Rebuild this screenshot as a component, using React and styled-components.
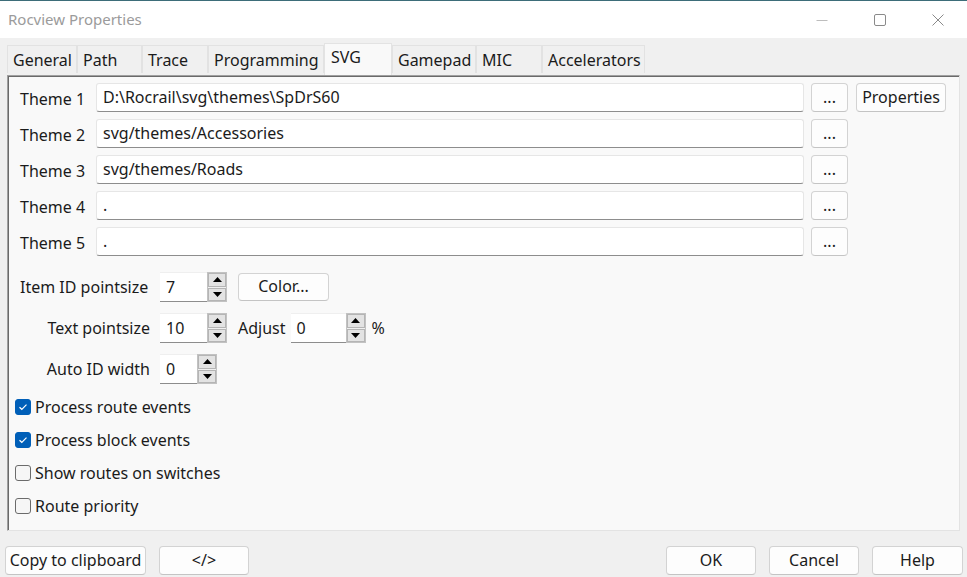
import React from 'react';
import styled, { createGlobalStyle } from 'styled-components';

const GlobalStyle = createGlobalStyle`
  html, body {
    margin: 0;
    padding: 0;
    background: #f0f0f0;
  }
  body {
    font-family: "Noto Sans", "Open Sans", sans-serif;
    font-size: 16px;
    color: #1b1b1b;
  }
  * { box-sizing: border-box; }
`

const Window = styled.div`
  width: 967px;
  height: 577px;
  background: #f0f0f0;
  display: flex;
  flex-direction: column;
  overflow: hidden;
`

const TitleBar = styled.div`
  height: 38px;
  flex: none;
  background: #ffffff;
  border-top: 1px solid #3d6d79;
  display: flex;
  align-items: center;
  padding-left: 8px;
`

const Title = styled.div`
  flex: 1;
  color: #9b9b9b;
  font-size: 15px;
  padding-bottom: 2px;
`

const WinButton = styled.div`
  width: 58px;
  height: 37px;
  display: flex;
  align-items: center;
  justify-content: center;
`

const TabBar = styled.div`
  height: 37px;
  flex: none;
  display: flex;
  align-items: flex-end;
  padding-left: 7px;
`

const Tab = styled.div`
  width: ${p => p.w}px;
  height: ${p => (p.active ? 32 : 28)}px;
  margin-bottom: ${p => (p.active ? 0 : 2)}px;
  padding: ${p => (p.active ? '2px 0 0 6px' : '3px 0 0 5px')};
  background: ${p => (p.active ? '#f9f9f9' : '#f0f0f0')};
  border: 1px solid ${p => (p.active ? '#e3e3e3' : '#e2e2e2')};
  border-bottom: none;
  white-space: nowrap;
  line-height: 22px;
`

const Panel = styled.div`
  margin: 0 7px;
  height: 456px;
  flex: none;
  background: #f9f9f9;
  border-top: 1px solid #a0a0a0;
  border-left: 1px solid #a0a0a0;
  border-right: 1px solid #e3e3e3;
  border-bottom: 1px solid #e3e3e3;
  box-shadow: inset 1px 1px 0 #6a6a6a;
  padding: 7px 13px 0 7px;
  display: flex;
  flex-direction: column;
`

const ThemeGrid = styled.div`
  display: grid;
  grid-template-columns: 76px 1fr 44px 98px;
  grid-auto-rows: 29px;
  row-gap: 7px;
  padding-left: 5px;
  align-items: center;
`

const Label = styled.div`
  white-space: nowrap;
  text-align: ${p => (p.right ? 'right' : 'left')};
  padding-top: ${p => p.pt || 0}px;
  padding-bottom: 1px;
`

const TextField = styled.div`
  height: 29px;
  background: #ffffff;
  border: 1px solid #e6e6e6;
  border-bottom: 1px solid #8d8d8d;
  border-radius: 3px;
  padding: 0 6px;
  line-height: 26px;
  white-space: nowrap;
  overflow: hidden;
`

const Button = styled.div`
  height: ${p => p.h || 29}px;
  width: ${p => p.w}px;
  margin-left: ${p => p.ml || 0}px;
  justify-self: end;
  background: #fdfdfd;
  border: 1px solid #d3d3d3;
  border-bottom-color: #c4c4c4;
  border-radius: 4px;
  display: flex;
  align-items: center;
  justify-content: center;
  white-space: nowrap;
  line-height: 1;
  padding-bottom: 2px;
`

const SpinSection = styled.div`
  display: grid;
  grid-template-columns: 130px auto;
  grid-auto-rows: 30px;
  column-gap: 10px;
  row-gap: 11px;
  margin-top: 16px;
  padding-left: 5px;
  align-items: center;
`

const SpinLine = styled.div`
  display: flex;
  align-items: center;
`

const Spin = styled.div`
  display: flex;
  height: 30px;
  width: ${p => p.w}px;
`

const SpinField = styled.div`
  flex: 1;
  background: #ffffff;
  border-top: 1px solid #efefef;
  border-bottom: 1px solid #8d8d8d;
  padding-left: 6px;
  line-height: 28px;
`

const SpinButtons = styled.div`
  width: 20px;
  display: flex;
  flex-direction: column;
  gap: 1px;
  border: 1px solid #c2c2c2;
  background: #f0f0f0;
`

const SpinButton = styled.div`
  flex: 1;
  background: #e3e3e3;
  border: 1px solid #b5b5b5;
  display: flex;
  align-items: center;
  justify-content: center;
`

const InlineText = styled.span`
  margin: 0 ${p => p.mr || 0}px 0 ${p => p.ml || 0}px;
  white-space: nowrap;
`

const CheckList = styled.div`
  margin-top: 6px;
  display: flex;
  flex-direction: column;
`

const CheckRow = styled.label`
  height: 33px;
  display: flex;
  align-items: center;
  gap: 4px;
  white-space: nowrap;
`

const Box = styled.span`
  width: 16px;
  height: 16px;
  border-radius: 3px;
  flex: none;
  background: ${p => (p.checked ? '#005fb8' : '#f6f6f6')};
  border: 1px solid ${p => (p.checked ? '#005fb8' : '#6b6b6b')};
  display: flex;
  align-items: center;
  justify-content: center;
`

const Footer = styled.div`
  flex: 1;
  display: flex;
  align-items: flex-start;
  padding: 15px 4px 0 5px;
  gap: 13px;
`

const Spacer = styled.div`
  flex: 1;
`

function Arrow({ up }) {
  return (
    <svg width="9" height="5" viewBox="0 0 9 5">
      <polygon points={up ? '0,5 9,5 4.5,0' : '0,0 9,0 4.5,5'} fill="#000" />
    </svg>
  );
}

function SpinCtrl({ value, w }) {
  return (
    <Spin w={w}>
      <SpinField>{value}</SpinField>
      <SpinButtons>
        <SpinButton><Arrow up /></SpinButton>
        <SpinButton><Arrow /></SpinButton>
      </SpinButtons>
    </Spin>
  );
}

function Check({ checked, children }) {
  return (
    <CheckRow>
      <Box checked={checked}>
        {checked && (
          <svg width="10" height="8" viewBox="0 0 10 8">
            <path d="M1.5 4.2 L3.8 6.3 L8.5 1.6" stroke="#fff" strokeWidth="1.2" fill="none" />
          </svg>
        )}
      </Box>
      {children}
    </CheckRow>
  );
}

const tabs = [
  ['General', 70], ['Path', 65], ['Trace', 66], ['Programming', 116],
  ['SVG', 68], ['Gamepad', 84], ['MIC', 66], ['Accelerators', 103],
];

const themes = [
  'D:\\Rocrail\\svg\\themes\\SpDrS60',
  'svg/themes/Accessories',
  'svg/themes/Roads',
  '.',
  '.',
];

function App() {
  return (
    <Window>
      <GlobalStyle />
      <TitleBar>
        <Title>Rocview Properties</Title>
        <WinButton>
          <svg width="12" height="12" viewBox="0 0 12 12"><path d="M0.5 6.5 H11.5" stroke="#bdbdbd" /></svg>
        </WinButton>
        <WinButton>
          <svg width="12" height="12" viewBox="0 0 12 12"><rect x="0.5" y="0.5" width="11" height="11" rx="1.5" stroke="#8a8a8a" fill="none" /></svg>
        </WinButton>
        <WinButton>
          <svg width="12" height="12" viewBox="0 0 12 12"><path d="M0.5 0.5 L11.5 11.5 M11.5 0.5 L0.5 11.5" stroke="#8a8a8a" /></svg>
        </WinButton>
      </TitleBar>

      <TabBar>
        {tabs.map(([name, w]) => (
          <Tab key={name} w={w} active={name === 'SVG'}>{name}</Tab>
        ))}
      </TabBar>

      <Panel>
        <ThemeGrid>
          {themes.map((t, i) => (
            <React.Fragment key={i}>
              <Label pt={4}>Theme {i + 1}</Label>
              <TextField>{t}</TextField>
              <Button w={37}>...</Button>
              {i === 0 ? <Button w={90}>Properties</Button> : <span />}
            </React.Fragment>
          ))}
        </ThemeGrid>

        <SpinSection>
          <Label>Item ID pointsize</Label>
          <SpinLine>
            <SpinCtrl value="7" w={67} />
            <Button ml={11} w={91} h={28}>Color...</Button>
          </SpinLine>
          <Label right>Text pointsize</Label>
          <SpinLine>
            <SpinCtrl value="10" w={67} />
            <InlineText ml={11} mr={5}>Adjust</InlineText>
            <SpinCtrl value="0" w={75} />
            <InlineText ml={6}>%</InlineText>
          </SpinLine>
          <Label right>Auto ID width</Label>
          <SpinLine>
            <SpinCtrl value="0" w={57} />
          </SpinLine>
        </SpinSection>

        <CheckList>
          <Check checked>Process route events</Check>
          <Check checked>Process block events</Check>
          <Check>Show routes on switches</Check>
          <Check>Route priority</Check>
        </CheckList>
      </Panel>

      <Footer>
        <Button w={141}>Copy to clipboard</Button>
        <Button w={90}>&lt;/&gt;</Button>
        <Spacer />
        <Button w={90}>OK</Button>
        <Button w={90}>Cancel</Button>
        <Button w={91}>Help</Button>
      </Footer>
    </Window>
  );
}

export default App;
